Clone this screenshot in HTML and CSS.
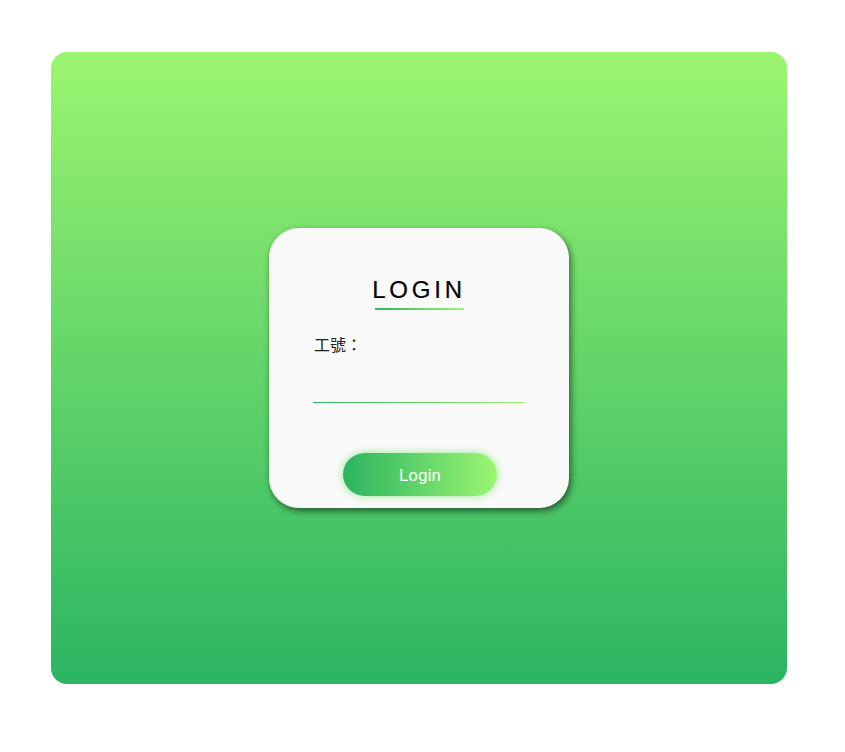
FILE: index.html
```html
<!DOCTYPE html>
<html lang="zh-Hant">
<head>
<meta charset="utf-8">
<title>Login</title>
<link rel="stylesheet" href="styles.css">
</head>
<body>
<div class="stage">
  <div class="card">
    <h2 class="title">LOGIN</h2>
    <div class="title-line"></div>
    <label class="label" for="emp">工號：</label>
    <input class="field" id="emp" type="text">
    <button class="btn" type="button">Login</button>
  </div>
</div>
</body>
</html>
```
FILE: styles.css
```css
html, body {
  margin: 0;
  background: #ffffff;
}
body {
  padding: 52px 58px 0 51px;
  font-family: Roboto, "Noto Sans CJK TC", sans-serif;
}
.stage {
  width: 736px;
  height: 632px;
  border-radius: 16px;
  background: linear-gradient(to bottom, #9cf571, #2bb462);
  display: flex;
  align-items: center;
  justify-content: center;
}
.card {
  box-sizing: border-box;
  width: 300px;
  height: 280px;
  padding: 50px 44px 0;
  border-radius: 30px;
  background: #f9f9f9;
  box-shadow: 2px 3px 7px rgba(0, 0, 0, 0.55);
  display: flex;
  flex-direction: column;
}
.title {
  margin: 0;
  font-family: "Liberation Sans", Arial, sans-serif;
  font-weight: 400;
  font-size: 24px;
  line-height: 24px;
  letter-spacing: 3.8px;
  text-align: center;
  color: #000;
  -webkit-text-stroke: 0.2px #000;
}
.title-line {
  align-self: center;
  width: 89px;
  height: 2px;
  margin: 6px 0 0 1px;
  background: linear-gradient(to right, #2bb462, #9cf571);
}
.label {
  margin-top: 22px;
  padding-left: 1px;
  font-family: "Noto Sans CJK TC", sans-serif;
  font-size: 16px;
  line-height: 24px;
  color: #222;
}
.field {
  box-sizing: border-box;
  width: 212px;
  height: 47px;
  margin: 0;
  padding: 0;
  border: none;
  border-bottom: 1px solid #2bb462;
  border-image: linear-gradient(to right, #2bb462, #9cf571) 1;
  background: transparent;
  outline: none;
  font-size: 16px;
}
.btn {
  align-self: center;
  width: 154px;
  height: 43px;
  margin: 50px 0 0 2px;
  border: none;
  border-radius: 22px;
  background: linear-gradient(to right, #2bb462, #9cf571);
  box-shadow: 0 0 8px rgba(120, 230, 110, 0.75);
  color: #fff;
  font-family: Roboto, sans-serif;
  font-size: 17px;
  cursor: pointer;
}
```
